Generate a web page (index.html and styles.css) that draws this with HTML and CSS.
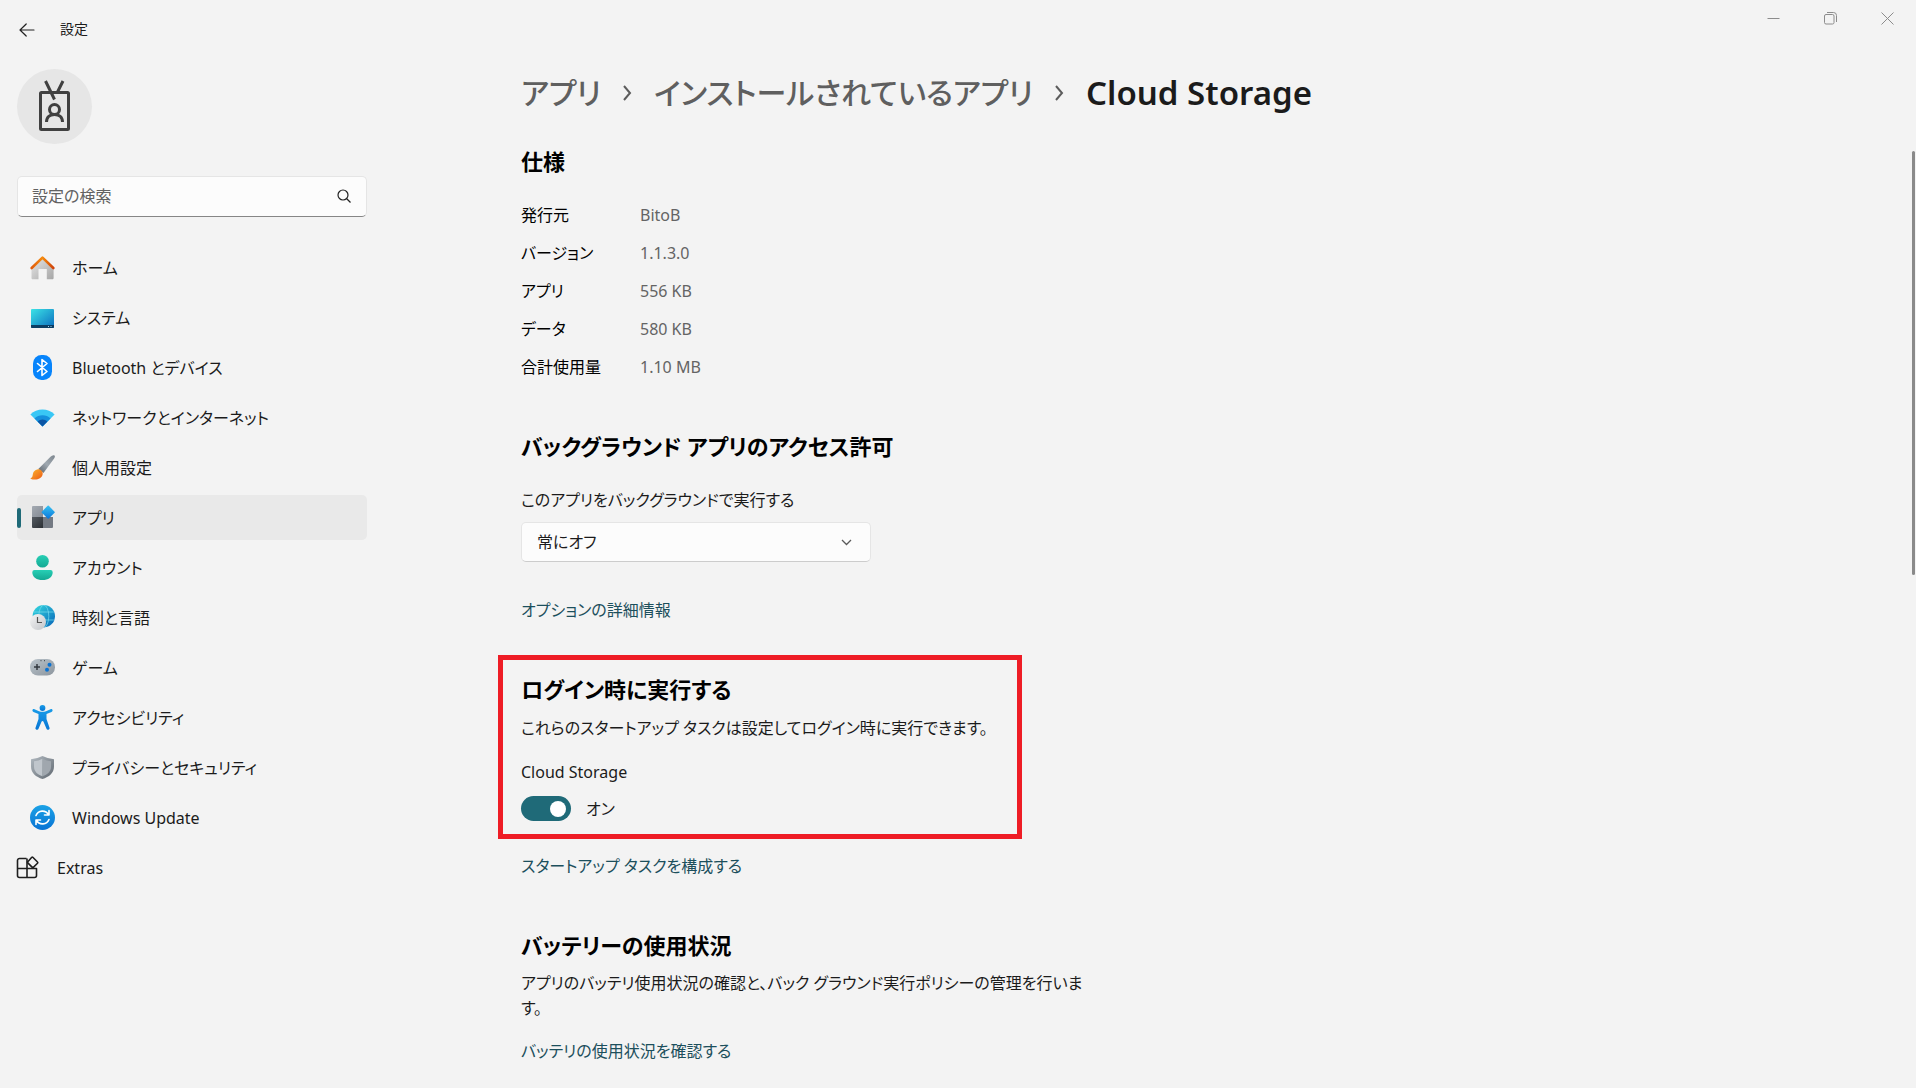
FILE: index.html
```html
<!DOCTYPE html>
<html lang="ja">
<head>
<meta charset="utf-8">
<meta name="viewport" content="width=device-width, initial-scale=1">
<title>設定</title>
<link rel="stylesheet" href="styles.css">
</head>
<body>
<header class="titlebar">
  <button class="back" type="button" aria-label="戻る">
    <svg width="16" height="16" viewBox="0 0 16 16" fill="none" stroke="#222" stroke-width="1.2" stroke-linecap="round" stroke-linejoin="round"><path d="M15 8H1M7.200 2 1 8l6.200 6"/></svg>
  </button>
  <span class="app-title">設定</span>
  <div class="window-controls">
    <button type="button" aria-label="最小化"><svg width="13" height="13" viewBox="0 0 13 13" fill="none" stroke="#8c8c8c"><path d="M.5 6.500h12"/></svg></button>
    <button type="button" aria-label="元に戻す"><svg width="13" height="13" viewBox="0 0 13 13" fill="none" stroke="#8c8c8c"><rect x=".5" y="2.500" width="9.500" height="9.500" rx="1.500"/><path d="M3 .5h6.500a3 3 0 0 1 3 3V10"/></svg></button>
    <button type="button" aria-label="閉じる"><svg width="13" height="13" viewBox="0 0 13 13" fill="none" stroke="#8c8c8c"><path d="m.5.5 12 12m0-12-12 12"/></svg></button>
  </div>
</header>

<div class="layout">
  <aside class="sidebar">
    <button class="avatar" type="button" aria-label="ユーザー">
      <svg width="75" height="75" viewBox="0 0 75 75" fill="none" stroke="#404040" stroke-width="3"><rect x="23.500" y="23.500" width="28" height="37" rx="1"/><path d="M28.500 12 37.500 30.500M46 12l-5.500 11"/><circle cx="37.500" cy="40.500" r="5"/><path d="M29.500 53c0-5 3.500-7.500 8-7.500s8 2.500 8 7.500"/></svg>
    </button>

    <div class="search">
      <input class="search-input" type="search" placeholder="設定の検索" aria-label="設定の検索">
      <svg class="search-icon" width="14" height="14" viewBox="0 0 14 14" fill="none" stroke="#222" stroke-width="1.200"><circle cx="6" cy="6" r="5"/><path d="m9.500 9.500 4 4"/></svg>
    </div>

    <nav class="nav">
      <a class="nav-item" href="#home">
        <svg class="nav-icon" viewBox="0 0 25 25"><defs><linearGradient id="hw" x2="1" y2="1"><stop stop-color="#e8e8e8"/><stop offset="1" stop-color="#a5a5a5"/></linearGradient><linearGradient id="hr"><stop stop-color="#e05c0c"/><stop offset=".5" stop-color="#f58a0c"/><stop offset="1" stop-color="#cf430b"/></linearGradient></defs><path fill="url(#hw)" d="M12.500 3 1.500 13v10c0 .8.500 1.300 1.300 1.300H8.500V14h8.300v10.300h5.500c.8 0 1.300-.5 1.300-1.300V13z"/><path fill="none" stroke="url(#hr)" stroke-width="2.600" stroke-linecap="round" stroke-linejoin="round" d="M1.700 13 12.500 2.600 23.300 13"/></svg>
        ホーム</a>
      <a class="nav-item" href="#system">
        <svg class="nav-icon" viewBox="0 0 25 25"><defs><linearGradient id="sy" x2="1" y2="1"><stop stop-color="#3be3e6"/><stop offset="1" stop-color="#0b6cbf"/></linearGradient></defs><rect x="1" y="4" width="23" height="19" rx="1" fill="url(#sy)"/><path fill="#0b3d63" d="M1 20h23v2a1 1 0 0 1-1 1H2a1 1 0 0 1-1-1z"/><path stroke="#9fd5ee" d="M18 21.500h1m1.500 0h1"/></svg>
        システム</a>
      <a class="nav-item" href="#bluetooth">
        <svg class="nav-icon" viewBox="0 0 25 25"><rect x="3" width="19" height="25" rx="8.500" fill="#0784fb"/><path fill="none" stroke="#fff" stroke-width="1.600" stroke-linecap="round" stroke-linejoin="round" d="m7.500 8.500 9.500 8-5 4V4.500l5 4-9.500 8"/></svg>
        Bluetooth とデバイス</a>
      <a class="nav-item" href="#network">
        <svg class="nav-icon" viewBox="0 0 25 25"><path fill="#39c7f5" d="M.4 9.500a17.200 17.200 0 0 1 24.200 0L12.500 21.500z"/><path fill="#1590dd" d="M4.500 13.500a11.300 11.300 0 0 1 16 0l-8 8z"/><path fill="#0b55a5" d="M7.600 16.600a7 7 0 0 1 9.800 0l-4.900 4.900z"/></svg>
        ネットワークとインターネット</a>
      <a class="nav-item" href="#personalization">
        <svg class="nav-icon" viewBox="0 0 25 25"><defs><linearGradient id="pb" x1="1" x2="0" y2="1"><stop stop-color="#7d868e"/><stop offset=".5" stop-color="#a0a9b1"/><stop offset="1" stop-color="#59616a"/></linearGradient><linearGradient id="pp" x2="1" y2="1"><stop stop-color="#fbb52c"/><stop offset="1" stop-color="#ec5a16"/></linearGradient></defs><path fill="url(#pb)" d="M24.500.6c.8.800.3 2-.4 3L13.500 18 8.300 14 20.500 1.800c1.200-1.200 3-2.200 4-1.200z"/><path fill="url(#pp)" d="M7.300 14.500c3-.8 6 2 5.300 5C11.500 24 6 25.800.3 23.700 2.800 22.300 2.500 21 3 18.600c.5-2.200 2-3.600 4.300-4.100z"/></svg>
        個人用設定</a>
      <a class="nav-item is-active" href="#apps" aria-current="page">
        <svg class="nav-icon" viewBox="0 0 25 25"><defs><linearGradient id="a1" x2="1" y2="1"><stop stop-color="#a4aab2"/><stop offset="1" stop-color="#858b94"/></linearGradient><linearGradient id="a2" x2="1" y2="1"><stop stop-color="#555b62"/><stop offset="1" stop-color="#2b2f34"/></linearGradient><linearGradient id="a3" x2="1" y2="1"><stop stop-color="#39c4f2"/><stop offset="1" stop-color="#0874da"/></linearGradient></defs><path fill="url(#a1)" d="M3 1h10v11H2V2a1 1 0 0 1 1-1z"/><path fill="url(#a2)" d="M2 12h11v11H3a1 1 0 0 1-1-1z"/><path fill="#747a83" d="M13 12h10v10a1 1 0 0 1-1 1h-9z"/><rect x="13.300" y="2.300" width="9.800" height="9.800" rx=".8" fill="url(#a3)" transform="rotate(45 18.200 7.200)"/></svg>
        アプリ</a>
      <a class="nav-item" href="#accounts">
        <svg class="nav-icon" viewBox="0 0 25 25"><defs><linearGradient id="ac" x2="0" y2="1"><stop stop-color="#27cfb5"/><stop offset="1" stop-color="#14a893"/></linearGradient></defs><circle cx="12.500" cy="6.300" r="6.300" fill="url(#ac)"/><path fill="url(#ac)" d="M4.500 15h16a2.200 2.200 0 0 1 2.200 2.200c0 5-4.500 7.800-10.200 7.800S2.300 22.200 2.300 17.200A2.200 2.200 0 0 1 4.500 15z"/></svg>
        アカウント</a>
      <a class="nav-item" href="#time">
        <svg class="nav-icon" viewBox="0 0 25 25"><defs><linearGradient id="tg" x2="1" y2="1"><stop stop-color="#35dbe0"/><stop offset="1" stop-color="#0763b8"/></linearGradient><linearGradient id="tc" x2="1" y2="1"><stop stop-color="#f5f5f5"/><stop offset="1" stop-color="#c2c5c9"/></linearGradient></defs><circle cx="13.800" cy="11.200" r="11.200" fill="url(#tg)"/><g fill="none" stroke="#75dcef" stroke-width=".7"><ellipse cx="13.800" cy="11.200" rx="5" ry="11"/><path d="M3.700 7h20.200M3.700 15h20.200"/></g><circle cx="8" cy="17" r="8" fill="url(#tc)"/><path fill="none" stroke="#555" stroke-width="1.200" d="M7.500 12v5.500H12"/></svg>
        時刻と言語</a>
      <a class="nav-item" href="#gaming">
        <svg class="nav-icon" viewBox="0 0 25 25"><defs><linearGradient id="gm" x2="1" y2="1"><stop stop-color="#bac4cb"/><stop offset="1" stop-color="#8c959e"/></linearGradient></defs><rect y="4" width="25" height="16.500" rx="8" fill="url(#gm)"/><path stroke="#343a40" stroke-width="1.500" d="M4 12h6M7 9v6"/><path stroke="#343a40" d="M10.500 5.700h1m2.500 0h1"/><circle cx="19.500" cy="9.800" r="2" fill="#0a72d2"/><circle cx="17" cy="14.800" r="2" fill="#0a72d2"/></svg>
        ゲーム</a>
      <a class="nav-item" href="#accessibility">
        <svg class="nav-icon" viewBox="0 0 25 25"><defs><linearGradient id="ax" x2="0" y2="1"><stop stop-color="#189be8"/><stop offset="1" stop-color="#0876d5"/></linearGradient></defs><circle cx="12.500" cy="3" r="2.900" fill="url(#ax)"/><path fill="url(#ax)" d="M4.500 4.200 9 6.200q3.500 1 7 0l4.500-2c2-.8 3 1.800 1 2.700L16.500 9v5l3 8.700c.6 2-2.200 3-3 1l-3-7c-.3-.8-1.700-.8-2 0l-3 7c-.8 2-3.600 1-3-1l3-8.700V9L3.500 6.900c-2-.9-1-3.500 1-2.700z"/></svg>
        アクセシビリティ</a>
      <a class="nav-item" href="#privacy">
        <svg class="nav-icon" viewBox="0 0 25 25"><defs><linearGradient id="pv" x2="1" y2="1"><stop stop-color="#b2bac1"/><stop offset="1" stop-color="#606870"/></linearGradient></defs><path fill="url(#pv)" d="M12.500 1q5 2.500 10.500 3c.6 0 1 .4 1 1v6.500c0 6.500-5 10.500-11.500 12.500C6 22 1 18 1 11.500V5c0-.6.400-1 1-1q5.500-.5 10.500-3z"/><path fill="#c0c6cc" d="M12.500 3.800q-4 2-8.500 2.500v5.500c0 4.700 3.500 7.800 8.500 9.500z"/><path fill="#a0a7ae" d="M12.500 3.800q4 2 8.500 2.500v5.500c0 4.700-3.500 7.800-8.500 9.500z"/></svg>
        プライバシーとセキュリティ</a>
      <a class="nav-item" href="#update">
        <svg class="nav-icon" viewBox="0 0 25 25"><defs><linearGradient id="wu" x2="0" y2="1"><stop stop-color="#1ba2e6"/><stop offset="1" stop-color="#0873d4"/></linearGradient></defs><circle cx="12.500" cy="12.500" r="12.500" fill="url(#wu)"/><path fill="none" stroke="#fff" stroke-width="1.600" stroke-linecap="round" stroke-linejoin="round" d="M6 10.500a7 7 0 0 1 12.500-1M19 5.500V10h-4.500M19 14.500a7 7 0 0 1-12.500 1M6 19.500V15h4.500"/></svg>
        Windows Update</a>
      <a class="nav-item nav-extra" href="#extras">
        <svg class="nav-icon" viewBox="0 0 25 25" fill="none" stroke="#1f1f1f" stroke-width="1.600" stroke-linejoin="round"><path d="M11.500 3.500h-7a2 2 0 0 0-2 2v15a2 2 0 0 0 2 2h15a2 2 0 0 0 2-2v-7h-19M12 3.500v19"/><path d="m17.800 2.300 4.700 4.700a.8.800 0 0 1 0 1.200l-4.700 4.700-5-5a.8.800 0 0 1 0-1.200l4-4.400a.8.800 0 0 1 1 0z"/></svg>
        Extras</a>
    </nav>
  </aside>

  <main class="content">
    <h1 class="breadcrumb">
      <a href="#apps">アプリ</a>
      <svg class="crumb-arrow" width="9" height="16" viewBox="0 0 9 16" fill="none" stroke="#5c5c5c" stroke-width="2"><path d="m1 1 6 7-6 7"/></svg>
      <a href="#installed">インストールされているアプリ</a>
      <svg class="crumb-arrow" width="9" height="16" viewBox="0 0 9 16" fill="none" stroke="#5c5c5c" stroke-width="2"><path d="m1 1 6 7-6 7"/></svg>
      <span class="crumb-current">Cloud Storage</span>
    </h1>

    <section class="specs">
      <h2>仕様</h2>
      <table class="spec-table">
        <tbody>
          <tr><th scope="row">発行元</th><td>BitoB</td></tr>
          <tr><th scope="row">バージョン</th><td>1.1.3.0</td></tr>
          <tr><th scope="row">アプリ</th><td>556 KB</td></tr>
          <tr><th scope="row">データ</th><td>580 KB</td></tr>
          <tr><th scope="row">合計使用量</th><td>1.10 MB</td></tr>
        </tbody>
      </table>
    </section>

    <section class="background">
      <h2>バックグラウンド アプリのアクセス許可</h2>
      <label class="field-label" for="bg-mode">このアプリをバックグラウンドで実行する</label>
      <div class="select">
        <select id="bg-mode"><option>常にオフ</option></select>
        <svg class="select-arrow" width="11" height="7" viewBox="0 0 11 7" fill="none" stroke="#5a5a5a" stroke-width="1.300"><path d="m1 1 4.500 4.500L10 1"/></svg>
      </div>
      <a class="link" href="#options">オプションの詳細情報</a>
    </section>

    <section class="startup">
      <h2>ログイン時に実行する</h2>
      <p class="text">これらのスタートアップ タスクは設定してログイン時に実行できます。</p>
      <label class="switch-label" for="startup-switch">Cloud Storage</label>
      <div class="switch-row">
        <input class="switch" id="startup-switch" type="checkbox" role="switch" checked>
        <span>オン</span>
      </div>
    </section>
    <a class="link" href="#startup-tasks">スタートアップ タスクを構成する</a>

    <section class="battery">
      <h2>バッテリーの使用状況</h2>
      <p class="text">アプリのバッテリ使用状況の確認と、バック グラウンド実行ポリシーの管理を行います。</p>
      <a class="link battery-link" href="#battery">バッテリの使用状況を確認する</a>
    </section>
  </main>
</div>
<div class="scroll-thumb"></div>
</body>
</html>
```
FILE: styles.css
```css
* {
  box-sizing: border-box;
}

body {
  margin: 0;
  min-height: 100vh;
  background: #f3f3f3;
  color: #1b1b1b;
  font-family: "Noto Sans", "Noto Sans CJK JP", sans-serif;
  font-size: 16px;
  line-height: 24px;
  font-feature-settings: "palt";
}

button,
input,
select {
  font: inherit;
  font-feature-settings: inherit;
  color: inherit;
}

button {
  padding: 0;
  border: 0;
  background: none;
}

svg {
  display: block;
  flex: none;
}

a {
  color: inherit;
  text-decoration: none;
}

h1,
h2,
p {
  margin: 0;
}

/* Title bar */
.titlebar {
  display: flex;
  align-items: flex-start;
  height: 60px;
}

.back {
  display: grid;
  place-items: center;
  width: 54px;
  height: 60px;
}

.app-title {
  padding-left: 6px;
  font-size: 14px;
  line-height: 58px;
}

.window-controls {
  display: flex;
  margin-left: auto;
}

.window-controls button {
  display: grid;
  place-items: center;
  width: 57px;
  height: 36px;
}

/* Two-pane layout */
.layout {
  display: grid;
  grid-template-columns: 350px minmax(0, 1fr);
  column-gap: 154px;
  padding: 0 17px;
}

.avatar {
  display: block;
  margin-top: 9px;
  border-radius: 50%;
  background: #e6e6e6;
}

.search {
  position: relative;
  margin-top: 32px;
}

.search-input {
  display: block;
  width: 100%;
  height: 41px;
  padding: 0 40px 2px 14px;
  border: 1px solid #e5e5e5;
  border-bottom-color: #868686;
  border-radius: 5px;
  background: #fcfcfc;
}

.search-input::placeholder {
  color: #626262;
}

.search-icon {
  position: absolute;
  top: 13px;
  right: 16px;
}

.nav {
  display: flex;
  flex-direction: column;
  gap: 5px;
  margin-top: 28px;
}

.nav-item {
  display: flex;
  align-items: center;
  gap: 17px;
  height: 45px;
  padding-left: 13px;
  border-radius: 5px;
  white-space: nowrap;
}

.nav-icon {
  width: 25px;
  height: 25px;
}

.is-active {
  position: relative;
  background: #e9e9e9;
}

.is-active::before {
  content: "";
  position: absolute;
  left: 0;
  width: 4px;
  height: 20px;
  border-radius: 2px;
  background: #1f6a78;
}

.nav-extra {
  margin-left: -2px;
  padding-left: 0;
}

/* Content */
.content {
  display: flex;
  flex-direction: column;
  align-items: flex-start;
}

.breadcrumb {
  display: flex;
  align-items: center;
  gap: 22px;
  height: 66px;
  color: #5f5f5f;
  font-size: 30px;
  font-weight: 500;
  line-height: 66px;
  white-space: nowrap;
}

.crumb-current {
  color: #1b1b1b;
  font-size: 33px;
  font-weight: 600;
}

h2 {
  color: #000;
  font-size: 22px;
  font-weight: 600;
  line-height: 32px;
}

.specs {
  padding-top: 19px;
}

.spec-table {
  margin-top: 19px;
  border-collapse: collapse;
}

.spec-table th,
.spec-table td {
  height: 38px;
  padding: 0;
  font-weight: 400;
  text-align: left;
}

.spec-table th {
  width: 119px;
  color: #000;
}

.spec-table td {
  color: #646464;
}

.background {
  padding-top: 44px;
}

.field-label {
  display: block;
  margin-top: 26px;
}

.select {
  position: relative;
  width: 350px;
  margin-top: 10px;
}

.select select {
  display: block;
  appearance: none;
  width: 100%;
  height: 40px;
  padding: 0 40px 0 15px;
  border: 1px solid #e5e5e5;
  border-bottom-color: #cccccc;
  border-radius: 5px;
  background: #fcfcfc;
}

.select-arrow {
  position: absolute;
  top: 17px;
  right: 19px;
}

.link {
  display: block;
  color: #1c4f5c;
}

.background .link {
  margin-top: 36px;
}

.startup {
  width: 524px;
  max-width: 100%;
  margin: 33px 0 15px -23px;
  padding: 13px 18px 13px;
  border: 5px solid #ee1c25;
}

.startup .text {
  margin-top: 11px;
  white-space: nowrap;
}

.switch-label {
  display: block;
  margin-top: 20px;
}

.switch-row {
  display: flex;
  align-items: center;
  gap: 15px;
  margin-top: 12px;
}

.switch {
  appearance: none;
  display: flex;
  justify-content: flex-end;
  align-items: center;
  width: 50px;
  height: 25px;
  margin: 0;
  padding-right: 5px;
  border-radius: 13px;
  background: #1f6a78;
}

.switch::before {
  content: "";
  width: 16px;
  height: 16px;
  border-radius: 50%;
  background: #fff;
}

.battery {
  width: 570px;
  max-width: 100%;
  padding-top: 51px;
}

.battery .text {
  margin-top: 10px;
  line-height: 25px;
}

.battery-link {
  margin-top: 18px;
}

.scroll-thumb {
  position: absolute;
  top: 151px;
  right: 1px;
  width: 3px;
  height: 424px;
  border-radius: 2px;
  background: #8a8a8a;
}
```
